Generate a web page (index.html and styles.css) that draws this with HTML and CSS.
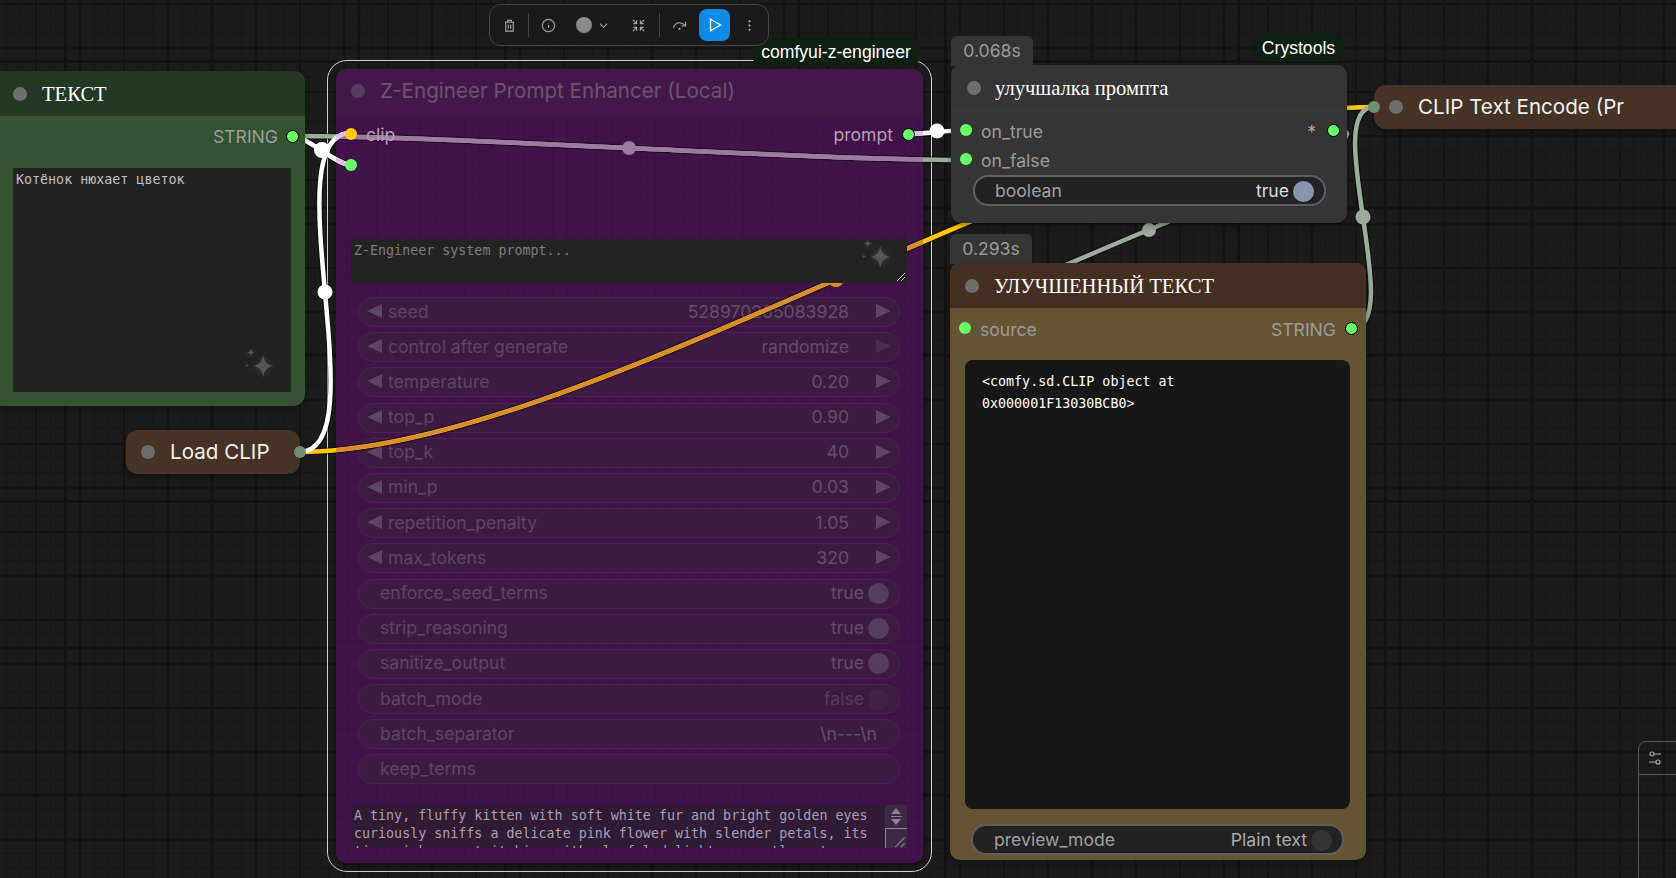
FILE: index.html
```html
<!DOCTYPE html>
<html lang="ru">
<head>
<meta charset="utf-8">
<title>ComfyUI</title>
<link rel="stylesheet" href="styles.css">
</head>
<body>
<main class="canvas">
  <div class="group"></div>
  <div class="group-label">comfyui-z-engineer</div>

  <section class="node node-purple">
    <header class="title title-purple"><span class="dot dot-purple"></span><span class="title-sans">Z-Engineer Prompt Enhancer (Local)</span></header>
    <div class="slot-area">
      <div class="slot-row">
        <span class="socket socket-yellow"></span><span class="slot-label">clip</span>
        <span class="slot-label push">prompt</span><span class="socket socket-out"></span>
      </div>
      <div class="slot-row slot-row-2"><span class="socket"></span></div>
    </div>
    <div class="textarea sys-prompt">Z-Engineer system prompt...
      <svg class="sparkle" viewBox="0 0 32 32"><path d="M18 6c1 6 3 9 9 10-6 1-8 4-9 10-1-6-3-9-9-10 6-1 8-4 9-10z"/><path d="M7 0c.5 3 1 3.500 3.500 4C8 4.500 7.500 5 7 8 6.500 5 6 4.500 3.500 4 6 3.500 6.500 3 7 0z"/><path d="M3.500 13.500c.3 1.500.5 1.800 2 2-1.500.3-1.700.5-2 2-.3-1.500-.5-1.700-2-2 1.500-.2 1.700-.5 2-2z"/></svg>
      <svg class="grip" viewBox="0 0 10 10"><path d="M1 9 9 1M5 9l4-4"/></svg>
    </div>
    <div class="widgets">
      <div class="widget w-purple"><i class="tri tri-l"></i><span class="w-name">seed</span><span class="w-val">528970265083928</span><i class="tri tri-r"></i></div>
      <div class="widget w-purple"><i class="tri tri-l"></i><span class="w-name">control after generate</span><span class="w-val">randomize</span><i class="tri tri-r tri-off"></i></div>
      <div class="widget w-purple"><i class="tri tri-l"></i><span class="w-name">temperature</span><span class="w-val">0.20</span><i class="tri tri-r"></i></div>
      <div class="widget w-purple"><i class="tri tri-l"></i><span class="w-name">top_p</span><span class="w-val">0.90</span><i class="tri tri-r"></i></div>
      <div class="widget w-purple"><i class="tri tri-l"></i><span class="w-name">top_k</span><span class="w-val">40</span><i class="tri tri-r"></i></div>
      <div class="widget w-purple"><i class="tri tri-l"></i><span class="w-name">min_p</span><span class="w-val">0.03</span><i class="tri tri-r"></i></div>
      <div class="widget w-purple"><i class="tri tri-l"></i><span class="w-name">repetition_penalty</span><span class="w-val">1.05</span><i class="tri tri-r"></i></div>
      <div class="widget w-purple"><i class="tri tri-l"></i><span class="w-name">max_tokens</span><span class="w-val">320</span><i class="tri tri-r"></i></div>
      <div class="widget w-purple w-toggle"><span class="w-name">enforce_seed_terms</span><span class="w-val">true</span><i class="knob knob-on"></i></div>
      <div class="widget w-purple w-toggle"><span class="w-name">strip_reasoning</span><span class="w-val">true</span><i class="knob knob-on"></i></div>
      <div class="widget w-purple w-toggle"><span class="w-name">sanitize_output</span><span class="w-val">true</span><i class="knob knob-on"></i></div>
      <div class="widget w-purple w-toggle"><span class="w-name">batch_mode</span><span class="w-val w-dim">false</span><i class="knob knob-off"></i></div>
      <div class="widget w-purple w-toggle w-text"><span class="w-name">batch_separator</span><span class="w-val">\n---\n</span></div>
      <div class="widget w-purple w-toggle"><span class="w-name">keep_terms</span></div>
    </div>
    <div class="textarea output-text">A tiny, fluffy kitten with soft white fur and bright golden eyes
curiously sniffs a delicate pink flower with slender petals, its
tiny pink nose twitching with playful delight as gentle motes
      <div class="scrollbar">
        <div class="scroll-arrows"><i class="sa-up"></i><i class="sa-mid"></i><i class="sa-down"></i></div>
        <div class="scroll-resize"><svg viewBox="0 0 20 20"><path d="M8 19 18 9M14 19l4-4"/></svg></div>
      </div>
    </div>
  </section>

  <svg class="wires" viewBox="0 0 1676 878" aria-hidden="true">
    <defs>
      <clipPath id="inNode"><rect x="336" y="69" width="587" height="794" rx="10"/></clipPath>
      <path id="wYellow" d="M300 452C581 452 1091 107 1372 107"/>
      <path id="wFalse" d="M292 136C460 136 798 160 966 160"/>
      <path id="wClip" d="M299 452C380 452 270 133 351 133"/>
      <path id="wString" d="M292 136C307 136 336 165 351 165"/>
      <path id="wTrue" d="M909 134C923 134 952 130 966 130"/>
      <path id="wOut" d="M1352 328C1407 328 1319 107 1374 107"/>
      <path id="wAny" d="M1334 130C1440 130 859 329 965 329"/>
    </defs>
    <g class="wire-shadow">
      <use href="#wYellow"/><use href="#wFalse"/><use href="#wClip"/><use href="#wString"/><use href="#wTrue"/><use href="#wOut"/><use href="#wAny"/>
    </g>
    <g class="wire wire-yellow"><use href="#wYellow"/><circle cx="836" cy="280" r="7"/></g>
    <g class="wire wire-sage"><use href="#wFalse"/><use href="#wOut"/><use href="#wAny"/><circle cx="1363" cy="217" r="7.500"/><circle cx="1149" cy="230" r="7"/></g>
    <g class="wire wire-white"><use href="#wClip"/><use href="#wString"/><use href="#wTrue"/><circle cx="325" cy="292" r="7.500"/><circle cx="322" cy="150" r="8"/><circle cx="937" cy="131" r="7.500"/></g>
    <g clip-path="url(#inNode)">
      <g class="wire wire-orange"><use href="#wYellow"/><circle cx="836" cy="280" r="7"/></g>
      <g class="wire wire-mauve"><use href="#wFalse"/><circle cx="629" cy="148" r="7"/></g>
      <g class="wire wire-pink"><use href="#wClip"/><use href="#wString"/><use href="#wTrue"/></g>
    </g>
  </svg>

  <section class="node node-text">
    <header class="title title-green"><span class="dot"></span><span class="title-serif">ТЕКСТ</span></header>
    <div class="text-out"><span class="slot-label">STRING</span><span class="socket socket-out"></span></div>
    <div class="textarea text-input">Котёнок нюхает цветок
      <svg class="sparkle" viewBox="0 0 32 32"><path d="M18 6c1 6 3 9 9 10-6 1-8 4-9 10-1-6-3-9-9-10 6-1 8-4 9-10z"/><path d="M7 0c.5 3 1 3.500 3.500 4C8 4.500 7.500 5 7 8 6.500 5 6 4.500 3.500 4 6 3.500 6.500 3 7 0z"/><path d="M3.500 13.500c.3 1.500.5 1.800 2 2-1.500.3-1.700.5-2 2-.3-1.500-.5-1.700-2-2 1.500-.2 1.700-.5 2-2z"/></svg>
    </div>
  </section>

  <section class="node node-load">
    <span class="dot"></span><span class="collapsed-name">Load CLIP</span><span class="socket socket-collapsed socket-right"></span>
  </section>

  <div class="badge badge-switch">0.068s</div>
  <div class="tag-crystools">Crystools</div>
  <section class="node node-switch">
    <header class="title title-switch"><span class="dot"></span><span class="title-serif">улучшалка промпта</span></header>
    <div class="switch-row"><span class="socket"></span><span class="slot-label">on_true</span><span class="slot-label push star">*</span><span class="socket socket-out"></span></div>
    <div class="switch-row"><span class="socket"></span><span class="slot-label">on_false</span></div>
    <div class="widget w-dark w-toggle w-bool"><span class="w-name">boolean</span><span class="w-val w-bright">true</span><i class="knob knob-blue"></i></div>
  </section>

  <div class="badge badge-preview">0.293s</div>
  <section class="node node-preview">
    <header class="title title-brown"><span class="dot"></span><span class="title-serif">УЛУЧШЕННЫЙ ТЕКСТ</span></header>
    <div class="preview-row"><span class="socket"></span><span class="slot-label">source</span><span class="slot-label push">STRING</span><span class="socket socket-out"></span></div>
    <div class="preview-box">&lt;comfy.sd.CLIP object at<br>0x000001F13030BCB0&gt;</div>
    <div class="widget w-dark w-toggle w-mode"><span class="w-name">preview_mode</span><span class="w-val">Plain text</span><i class="knob knob-dark"></i></div>
  </section>

  <section class="node node-encode">
    <span class="socket socket-collapsed socket-left"></span><span class="dot"></span><span class="collapsed-name">CLIP Text Encode (Pr</span>
  </section>

  <aside class="side-panel">
    <div class="side-head">
      <svg viewBox="0 0 16 16"><circle cx="5" cy="4" r="2"/><path d="M7 4h7M2 12h7"/><circle cx="11" cy="12" r="2"/></svg>
    </div>
  </aside>

  <nav class="toolbar">
    <button class="tb-btn"><svg viewBox="0 0 16 16"><path d="M3 4.500h10M6 4.500V2.500h4v2M4 4.500V14h8V4.500M6.700 7v4.500M9.300 7v4.500"/></svg></button>
    <span class="tb-sep"></span>
    <button class="tb-btn"><svg viewBox="0 0 16 16"><circle cx="8" cy="8" r="6.500"/><path d="M8 7.500v3M8 5.300v.3"/></svg></button>
    <button class="tb-color"><span class="tb-swatch"></span><svg viewBox="0 0 12 12"><path d="M2 4l4 4 4-4"/></svg></button>
    <button class="tb-btn tb-collapse"><svg viewBox="0 0 16 16"><path d="M2 2l4 4M6 2.500V6H2.500M14 2l-4 4M10 2.500V6h3.500M2 14l4-4M6 13.500V10H2.500M14 14l-4-4M10 13.500V10h3.500"/></svg></button>
    <span class="tb-sep tb-sep-2"></span>
    <button class="tb-btn"><svg viewBox="0 0 16 16"><path d="M1.500 10.500C2.500 7 5 5 8 5c2.500 0 4 1 6 3M14.500 4v4.500H10"/><circle cx="8" cy="11.500" r=".6"/></svg></button>
    <button class="tb-play"><svg viewBox="0 0 16 16"><path d="M3.500 2.200 13.500 8l-10 5.800z"/></svg></button>
    <button class="tb-btn tb-more"><svg viewBox="0 0 16 16"><circle cx="8" cy="3.500" r="1"/><circle cx="8" cy="8" r="1"/><circle cx="8" cy="12.500" r="1"/></svg></button>
  </nav>
</main>
</body>
</html>
```
FILE: styles.css
```css
* { box-sizing: border-box; }
html, body { margin: 0; height: 100%; overflow: hidden; }
body { background: #1c1c1c; font-family: "Inter", "Liberation Sans", sans-serif; }

.canvas {
  position: relative;
  width: 1676px;
  height: 878px;
  overflow: hidden;
  background-color: #1c1c1c;
  background-image:
    linear-gradient(90deg, #131313 3px, transparent 3px),
    linear-gradient(#131313 3px, transparent 3px),
    linear-gradient(90deg, #151515 2px, transparent 2px),
    linear-gradient(#151515 2px, transparent 2px),
    linear-gradient(90deg, #171717 1px, transparent 1px),
    linear-gradient(#171717 1px, transparent 1px);
  background-size: 146.67px 146.67px, 146.67px 146.67px, 44px 44px, 44px 44px, 14.667px 14.667px, 14.667px 14.667px;
  background-position: 64px 0, 0 60px, 35px 0, 0 3px, 6px 0, 0 3px;
}

/* free-canvas placement */
.group { position: absolute; left: 327px; top: 59.500px; width: 605px; height: 812.500px; border: 1.500px solid #d0d0d0; border-radius: 20px; }
.group-label { position: absolute; left: 753px; top: 37px; width: 166px; height: 29px; border-radius: 8px; background: #0f1f12; color: #fff; font: 17.600px/30px "Liberation Sans", sans-serif; text-align: center; }
.wires { position: absolute; left: 0; top: 0; width: 1676px; height: 878px; z-index: 1; pointer-events: none; }
.node { position: absolute; z-index: 3; box-shadow: 0 3px 6px rgba(0,0,0,.35); }

.node-purple { left: 336px; top: 69px; width: 587px; height: 794px; z-index: auto; background-color: #42124a; background-image: linear-gradient(90deg, rgba(0,0,0,.08) 1px, transparent 1px), linear-gradient(rgba(0,0,0,.08) 1px, transparent 1px); background-size: 14.667px 14.667px; background-position: 11px 0; border-radius: 10px; display: flex; flex-direction: column; }
.node-text { left: -10px; top: 71px; width: 315px; height: 335px; background: #355233; border-radius: 12px; display: flex; flex-direction: column; }
.node-load { left: 126px; top: 430px; width: 174px; height: 44px; background: #453426; border-radius: 12px; display: flex; align-items: center; padding: 0 0 1px 15px; gap: 15px; }
.node-switch { left: 951px; top: 65px; width: 396px; height: 158px; background: #353535; border-radius: 10px; display: flex; flex-direction: column; }
.node-preview { left: 950px; top: 263px; width: 416px; height: 597px; background: #655434; border-radius: 10px; display: flex; flex-direction: column; }
.node-encode { left: 1374px; top: 85px; width: 340px; height: 44px; background: #453426; border-radius: 12px; display: flex; align-items: center; padding: 0 0 1px 15px; gap: 15px; }

/* titles */
.title { flex: none; display: flex; align-items: center; gap: 15px; border-radius: 10px 10px 0 0; }
.title-purple { height: 47px; padding: 0 0 4px 15px; background: #431849; }
.title-green { height: 45px; padding: 1px 0 0 23px; background: #243823; }
.title-switch { height: 46px; padding: 1px 0 0 16px; background: #353535; border-bottom: 1px solid #3c3c3c; gap: 14px; }
.title-brown { height: 45px; padding: 1px 0 0 15px; background: #443020; }
.title-sans { color: #6a5270; font-size: 20.600px; }
.title-serif { color: #fff; font: 20.600px "Liberation Serif", serif; }
.dot { flex: none; width: 14px; height: 14px; border-radius: 50%; background: #6e6e6e; }
.dot-purple { background: #583c60; }
.collapsed-name { color: #f0f0f0; font-size: 20.600px; white-space: nowrap; }

/* sockets */
.socket { flex: none; width: 12px; height: 12px; border-radius: 50%; background: #6f6; }
.socket-yellow { background: #fc0; }
.socket-out { width: 13px; height: 13px; border: 1.500px solid #000; }
.socket-collapsed { position: absolute; background: #6c8f6c; top: 16px; }
.socket-right { right: -6px; }
.socket-left { left: -6px; }

.slot-label { color: #9a9a9a; font-size: 17.600px; line-height: 1; white-space: nowrap; padding-top: 2px; }
.push { margin-left: auto; }

.slot-area { padding: 3px 8px 0 9px; height: 123px; }
.slot-row { height: 30px; display: flex; align-items: center; gap: 9px; }
.slot-row-2 { margin-top: 1px; }
.node-purple .slot-label { color: #b59fb8; position: relative; z-index: 2; }
.node-purple .socket { position: relative; z-index: 2; }

/* textareas */
.textarea { position: relative; z-index: 2; background: #222; color: #c0c0c0; font: 13.333px/18px "DejaVu Sans Mono", monospace; white-space: pre-wrap; padding: 3px 3px; overflow: hidden; }
.sys-prompt { margin: 0 16px 0 15px; height: 44px; flex: none; color: #7c7c7c; background: #232323; }
.text-out { flex: none; height: 30px; margin-top: 5px; padding-right: 6px; display: flex; align-items: center; justify-content: flex-end; gap: 8px; }
.text-input { flex: none; margin: 17px 14px 0 23px; height: 224px; }
.output-text { margin: 21px 16px 0 15px; height: 43px; flex: none; background: #2f1c34; color: #aa9db2; padding: 2px 3px; }
.sparkle { position: absolute; width: 36px; height: 36px; fill: #565656; filter: drop-shadow(0 0 3px rgba(255,255,255,.14)); }
.sys-prompt .sparkle { right: 11px; top: 0; }
.text-input .sparkle { right: 12px; bottom: 8px; }
.grip { position: absolute; right: 1px; bottom: 1px; width: 10px; height: 10px; fill: none; stroke: #c8c8c8; stroke-width: 1; }
.scrollbar { position: absolute; right: 0; top: 0; width: 22px; height: 43px; background: #3b2a42; display: flex; flex-direction: column; }
.scroll-arrows { height: 23px; display: flex; flex-direction: column; align-items: center; justify-content: center; gap: 2px; }
.sa-up, .sa-down { display: block; width: 0; height: 0; border-left: 5px solid transparent; border-right: 5px solid transparent; }
.sa-up { border-bottom: 6px solid #8d8094; }
.sa-down { border-top: 6px solid #8d8094; }
.sa-mid { display: block; width: 11px; height: 1px; background: #8d8094; }
.scroll-resize { flex: 1; border: 1px solid #8d8094; border-width: 1px 0 0 1px; background: #3b2a42; position: relative; }
.scroll-resize svg { position: absolute; right: 0; bottom: 0; width: 20px; height: 19px; fill: none; stroke: #8d8094; stroke-width: 1.200; }

/* widgets */
.widgets { flex: none; margin: 14px 23px 0 22px; display: flex; flex-direction: column; gap: 5.200px; }
.widget { flex: none; height: 30px; border-radius: 15px; display: flex; align-items: center; font-size: 17.600px; white-space: nowrap; }
.w-purple { background: #3d1a41; border: 1px solid #47244d; color: #654c6b; padding: 0 8px 2px 8px; }
.w-name { margin-left: 6px; color: #5e4465; }
.w-val { margin-left: auto; }
.w-dim { color: #533a59; }
.tri { flex: none; display: block; width: 0; height: 0; border-top: 7px solid transparent; border-bottom: 7px solid transparent; }
.tri-l { border-right: 15px solid #5e4468; }
.tri-r { border-left: 15px solid #5e4468; margin-left: 27px; }
.tri-off { border-left-color: #4b2b52; }
.w-toggle { padding: 0 10px 2px 15px; }
.knob { flex: none; display: block; width: 21px; height: 21px; border-radius: 50%; margin-left: 4px; position: relative; top: 1px; }
.knob-on { background: #563b62; }
.knob-off { background: #432246; }
.w-text { padding-right: 22px; }
.knob-blue { background: #8697ad; }
.knob-dark { background: #333; }
.w-dark { background: #222; border: 2px solid #5e5e5e; color: #aaa; }
.w-dark .w-name { color: #a0a0a0; }
.w-bright { color: #ddd; }

/* switch node */
.switch-row { flex: none; height: 29px; display: flex; align-items: center; gap: 9px; padding: 0 7px 0 9px; }
.node-switch .title + .switch-row { margin-top: 4.500px; }
.node-switch .slot-label { padding-top: 3px; }
.star { margin-right: 2px; color: #aaa; }
.w-bool { margin: 1.500px 21px 0 22px; height: 31px; padding: 0 10px 1px 14px; }

/* preview node */
.preview-row { flex: none; height: 30px; margin-top: 5px; display: flex; align-items: center; gap: 9px; padding: 0 8px 0 9px; }
.preview-row .slot-label { padding-top: 4px; }
.preview-box { flex: none; margin: 17px 16px 0 15px; height: 449px; background: #171717; border-radius: 8px; color: #fff; font: 13.333px/22px "DejaVu Sans Mono", monospace; padding: 11px 17px; }
.w-mode { margin: 15px 22px 0 21px; height: 31px; padding: 0 10px 1px 15px; }

/* badges */
.badge { position: absolute; z-index: 2; width: 82px; height: 30px; background: #353535; border-radius: 6px 6px 0 0; color: #9a9a9a; font-size: 17.600px; line-height: 30px; text-align: center; }
.badge-switch { left: 951px; top: 36px; }
.badge-preview { left: 950px; top: 234px; }
.tag-crystools { position: absolute; z-index: 2; left: 1254px; top: 33px; width: 89px; height: 29px; background: #0f1f12; border-radius: 8px; color: #fff; font: 17.600px/30px "Liberation Sans", sans-serif; text-align: center; }

/* side panel */
.side-panel { position: absolute; left: 1638px; top: 741px; width: 50px; height: 150px; border: 1px solid #555; border-radius: 8px 0 0 0; z-index: 2; }
.side-head { height: 33px; border-bottom: 1px solid #555; display: flex; align-items: center; padding-left: 8px; }
.side-head svg { width: 16px; height: 16px; fill: none; stroke: #aaa; stroke-width: 1.200; }

/* toolbar */
.toolbar { position: absolute; left: 489px; top: 4px; z-index: 4; width: 280px; height: 42px; background: #1a1a1a; border: 1px solid #454545; border-radius: 12px; padding-left: 3px; display: flex; align-items: center; }
.toolbar button { flex: none; padding: 0; border: 0; background: none; display: flex; align-items: center; justify-content: center; }
.tb-btn { width: 32px; height: 32px; }
.tb-btn svg { width: 15px; height: 15px; fill: none; stroke: #a4a4a4; stroke-width: 1.200; }
.tb-sep { flex: none; width: 1px; height: 24px; background: #454545; margin: 0 3px; }
.tb-sep-2 { margin-left: 5px; }
.toolbar .tb-color { width: 42px; height: 32px; margin-left: 6px; gap: 6px; padding-left: 2px; }
.tb-swatch { width: 16px; height: 16px; border-radius: 50%; background: #8a8a8a; }
.tb-color svg { width: 11px; height: 11px; fill: none; stroke: #a4a4a4; stroke-width: 1.200; }
.tb-collapse { margin-left: 10px; }
.toolbar .tb-play { width: 31px; height: 32px; margin-left: 4px; background: #0b8ce9; border-radius: 8px; }
.tb-play svg { width: 16px; height: 16px; fill: none; stroke: #fff; stroke-width: 1.300; }
.tb-more { margin-left: 3px; }
.tb-more svg { fill: #c8c8c8; stroke: none; }

/* wires */
.wires use { fill: none; stroke-linecap: round; }
.wire-shadow { fill: none; stroke: rgba(0,0,0,.4); stroke-width: 7; }
.wire { stroke-width: 4.500; fill: none; }
.wire circle { stroke: none; }
.wire-yellow { stroke: #ffc800; }
.wire-yellow circle { fill: #ffc800; }
.wire-orange { stroke: #d88c2c; stroke-width: 4; }
.wire-orange circle { fill: #d88c2c; }
.wire-sage { stroke: #9bac9b; }
.wire-sage circle { fill: #9bac9b; }
.wire-mauve { stroke: #9d7aa2; }
.wire-mauve circle { fill: #9d7aa2; }
.wire-white { stroke: #fff; }
.wire-white circle { fill: #fff; }
.wire-pink { stroke: #e6bfe9; }
```
